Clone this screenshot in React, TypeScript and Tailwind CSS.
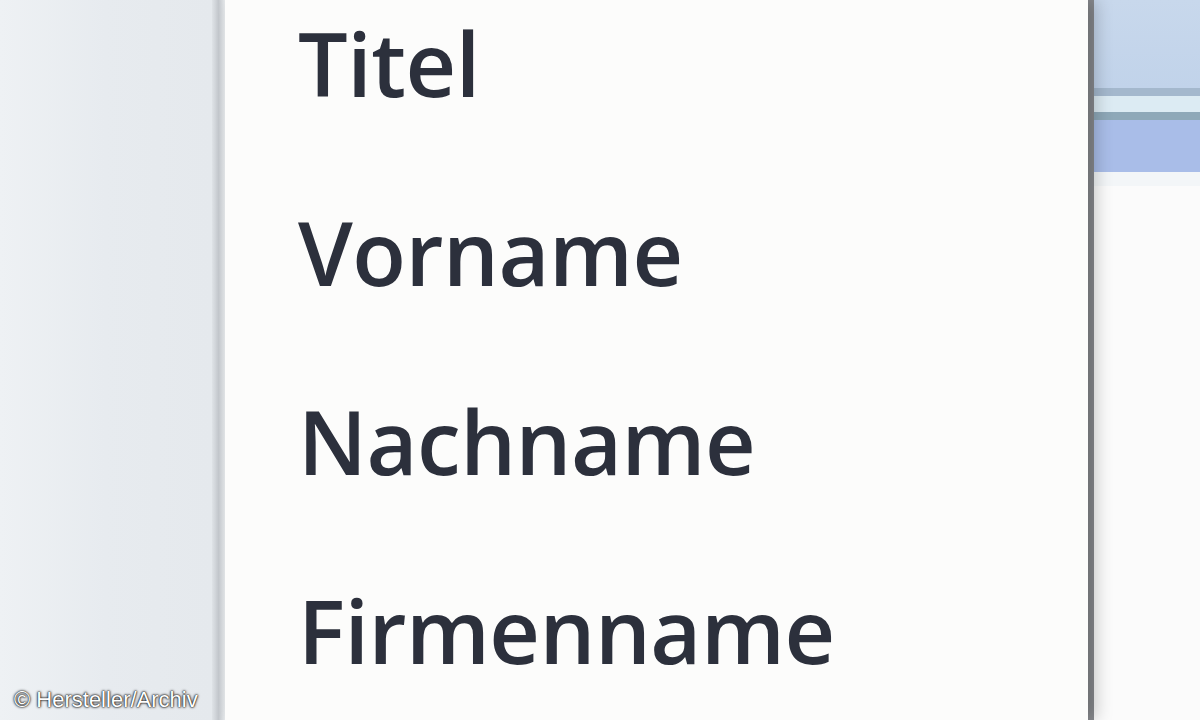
const fields = ["Titel", "Vorname", "Nachname", "Firmenname"];

export default function App() {
  return (
    <div className="relative flex h-[720px] w-[1200px] overflow-hidden bg-white">
      {/* left pane behind the menu */}
      <div className="w-[212px] shrink-0 bg-gradient-to-r from-[#eef1f4] via-[#e7ebef] to-[#e5e9ed]" />
      <div className="w-[13px] shrink-0 bg-gradient-to-r from-[#dfe3e7] via-[#c4c8cd] to-[#e9ecee]" />

      {/* dropdown menu */}
      <div className="relative z-10 w-[863px] shrink-0 bg-[#fcfcfb] shadow-[8px_0_16px_rgba(0,0,0,0.22)]">
        <ul
          className="pl-[73px] pt-[19px] text-[#2c303c]"
          style={{ fontFamily: '"Open Sans", "Noto Sans", sans-serif' }}
        >
          {fields.map((f) => (
            <li key={f} className="h-[189px] text-[88px] font-semibold leading-none tracking-[-0.5px]">
              {f}
            </li>
          ))}
        </ul>
      </div>
      <div className="w-[6px] shrink-0 bg-[#8a8c90]" />

      {/* window content on the right */}
      <div className="flex flex-1 flex-col bg-[#fbfbfb]">
        <div className="h-[88px] bg-gradient-to-b from-[#c8d8ec] to-[#c1d3ea]" />
        <div className="h-[8px] bg-[#a4b8cd]" />
        <div className="h-[16px] bg-[#dcebf3]" />
        <div className="h-[8px] bg-[#8ea8b8]" />
        <div className="h-[52px] bg-[#a9bde8]" />
        <div className="h-[14px] bg-[#f3f6f8]" />
      </div>

      <div
        className="absolute bottom-[9px] left-[14px] text-[22px] leading-none text-white [text-shadow:0_0_3px_#222,0_0_2px_#222,0_0_1px_#222]"
        style={{ fontFamily: '"Liberation Sans", Arial, sans-serif' }}
      >
        © Hersteller/Archiv
      </div>
    </div>
  );
}
